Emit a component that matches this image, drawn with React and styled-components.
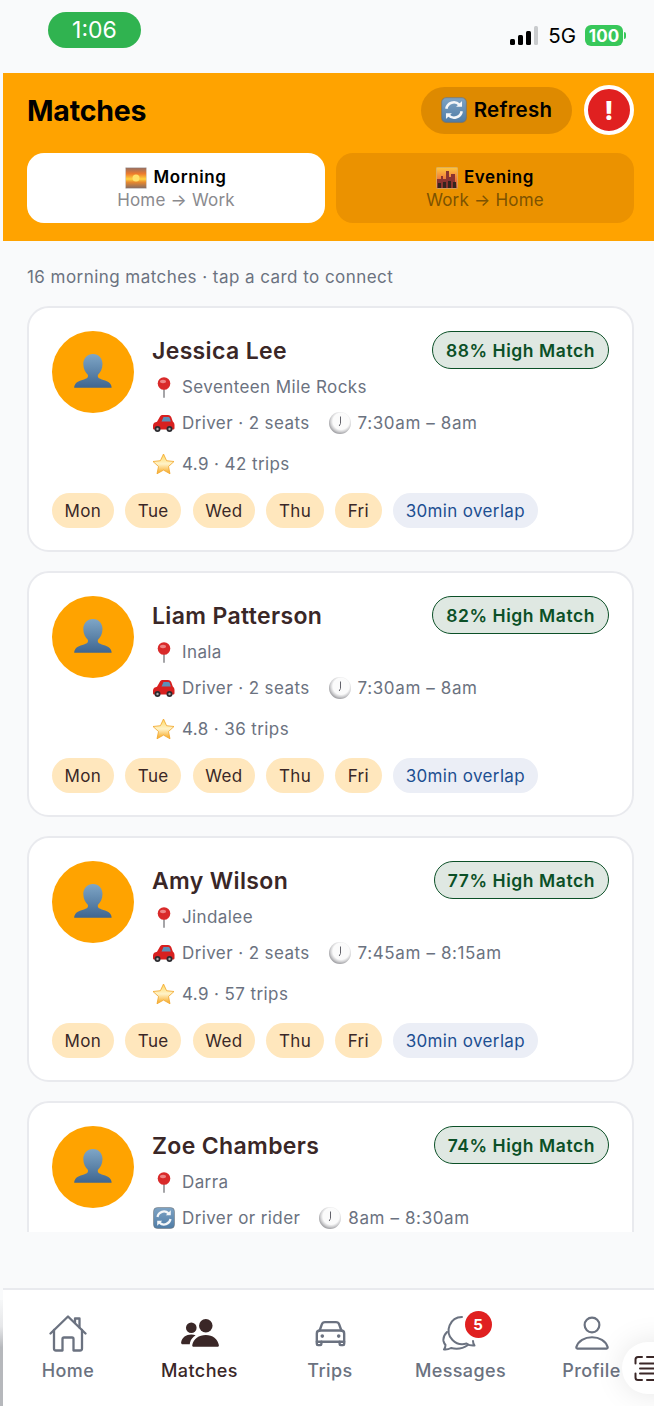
import React from "react";
import styled, { createGlobalStyle } from "styled-components";

const Global = createGlobalStyle`
  html, body { margin: 0; padding: 0; background: #f9fafb; }
  * { box-sizing: border-box; }
  body { font-family: Inter, "Noto Sans", "Liberation Sans", sans-serif; -webkit-font-smoothing: antialiased; }
`;

const Page = styled.div`
  position: relative;
  width: 654px;
  height: 1406px;
  overflow: hidden;
  display: flex;
  flex-direction: column;
  padding-left: 3px;
  background: #f9fafb;
`;
const StatusBar = styled.div`
  height: 73px;
  flex: none;
  display: flex;
  justify-content: space-between;
  padding: 12px 31px 0 45px;
`;
const Clock = styled.div`
  width: 93px;
  height: 36px;
  border-radius: 18px;
  background: #30b350;
  color: #fff;
  font-size: 23px;
  font-weight: 400;
  display: flex;
  align-items: center;
  justify-content: center;
`;
const StatusRight = styled.div`
  display: flex;
  align-items: center;
  height: 21px;
  margin-top: 13px;
  gap: 9px;
`;
const Net = styled.span`
  font-size: 20.5px;
  color: #000;
  line-height: 1;
  padding-top: 1px;
`;
const Battery = styled.div`
  position: relative;
  width: 38px;
  height: 21px;
  border-radius: 6px;
  background: #38c75a;
  color: #fff;
  font-weight: 700;
  font-size: 17px;
  display: flex;
  align-items: center;
  justify-content: center;
  &::after {
    content: "";
    position: absolute;
    right: -3px;
    top: 7px;
    width: 2px;
    height: 7px;
    border-radius: 0 2px 2px 0;
    background: #38c75a;
  }
`;
const Header = styled.header`
  flex: none;
  height: 168px;
  background: #ffa300;
  padding: 12px 20px 0 24px;
`;
const HeaderTop = styled.div`
  display: flex;
  align-items: center;
  height: 50px;
`;
const Title = styled.h1`
  flex: 1;
  margin: 0;
  font-size: 28.5px;
  font-weight: 700;
  color: #000;
  letter-spacing: -0.2px;
`;
const RefreshButton = styled.div`
  width: 151px;
  height: 47px;
  border-radius: 24px;
  background: #de8a00;
  display: flex;
  align-items: center;
  justify-content: center;
  gap: 7px;
  font-size: 20.5px;
  font-weight: 600;
  letter-spacing: 0.25px;
  color: #000;
  margin-right: 12px;
  padding-bottom: 1px;
`;
const Alert = styled.div`
  width: 50px;
  height: 50px;
  border-radius: 50%;
  background: #e02020;
  border: 4px solid #fff;
  color: #fff;
  display: flex;
  align-items: center;
  justify-content: center;
  font-size: 26px;
  font-weight: 800;
`;
const Tabs = styled.div`
  display: grid;
  grid-template-columns: 298px 298px;
  gap: 11px;
  margin-top: 18px;
`;
const Tab = styled.div`
  height: 70px;
  border-radius: 17px;
  background: ${(p) => (p.$active ? "#fff" : "#eb9200")};
  display: flex;
  flex-direction: column;
  align-items: center;
  justify-content: center;
  gap: 1px;
`;
const TabName = styled.div`
  display: flex;
  align-items: center;
  gap: 6px;
  font-size: 17px;
  font-weight: 600;
  letter-spacing: 0.6px;
  color: #000;
  line-height: 21px;
  margin-top: 1px;
`;
const TabRoute = styled.div`
  font-size: 17px;
  letter-spacing: 0.2px;
  line-height: 21px;
  color: ${(p) => (p.$active ? "#8a8a8e" : "#7d5200")};
`;
const Body = styled.main`
  flex: none;
  height: 991px;
  overflow: hidden;
  padding: 25px 20px 0 24px;
`;
const Summary = styled.div`
  font-size: 17px;
  line-height: 22px;
  letter-spacing: 0.45px;
  color: #6b7280;
  margin-bottom: 18px;
`;
const CardList = styled.div`
  display: flex;
  flex-direction: column;
  gap: 19px;
`;
const Card = styled.article`
  height: 246px;
  flex: none;
  background: #fff;
  border: 2px solid #e9eaee;
  border-radius: 22px;
  padding: 23px;
`;
const CardMain = styled.div`
  display: flex;
  gap: 18px;
`;
const Avatar = styled.div`
  width: 82px;
  height: 82px;
  flex: none;
  border-radius: 50%;
  background: #ffa300;
  display: flex;
  align-items: center;
  justify-content: center;
`;
const Info = styled.div`
  flex: 1;
  min-width: 0;
`;
const NameRow = styled.div`
  display: flex;
  justify-content: space-between;
  align-items: flex-start;
  height: 38px;
`;
const Name = styled.div`
  font-size: 23px;
  font-weight: 600;
  letter-spacing: 0.35px;
  color: #3a2727;
  line-height: 40px;
`;
const MatchPill = styled.div`
  height: 38px;
  border-radius: 19px;
  background: #dfe8e2;
  border: 1.5px solid #0b5027;
  color: #0b5027;
  font-size: 17.5px;
  font-weight: 600;
  letter-spacing: 0.56px;
  display: flex;
  align-items: center;
  padding: 0 13px;
`;
const Meta = styled.div`
  display: flex;
  align-items: center;
  gap: 19px;
  height: 22px;
  margin-top: ${(p) => p.$top}px;
`;
const MetaItem = styled.div`
  display: flex;
  align-items: center;
  gap: 7px;
  font-size: 17px;
  color: #6b7280;
  letter-spacing: ${(p) => (p.$wide ? "0.62px" : "0.4px")};
  white-space: nowrap;
`;
const EmojiSlot = styled.span`
  width: 23px;
  height: 22px;
  display: flex;
  align-items: center;
  justify-content: center;
`;
const Chips = styled.div`
  display: flex;
  gap: 11.4px;
  margin-top: 18px;
`;
const Chip = styled.div`
  height: 35px;
  border-radius: 18px;
  padding: 0 12.6px;
  display: flex;
  align-items: center;
  font-size: 17px;
  letter-spacing: 0.35px;
  background: ${(p) => (p.$blue ? "#ebeef6" : "#ffe7bd")};
  color: ${(p) => (p.$blue ? "#1d4f91" : "#3a2727")};
`;
const Nav = styled.nav`
  flex: 1;
  background: #fff;
  border-top: 2px solid #e9eaee;
  margin-top: 56px;
  display: grid;
  grid-template-columns: 130px 133px 128px 133px 129px;
  padding-top: 25px;
  position: relative;
`;
const NavItem = styled.div`
  display: flex;
  flex-direction: column;
  align-items: center;
  height: 66px;
  gap: 8px;
  color: ${(p) => (p.$active ? "#3a2727" : "#6b7280")};
  font-size: 18px;
  font-weight: 500;
  letter-spacing: 0.4px;
`;
const IconWrap = styled.div`
  position: relative;
  width: 40px;
  height: 38px;
  display: flex;
  align-items: center;
  justify-content: center;
`;
const Badge = styled.div`
  position: absolute;
  left: 24px;
  top: -4px;
  width: 27px;
  height: 27px;
  border-radius: 50%;
  background: #e02020;
  color: #fff;
  font-size: 15px;
  font-weight: 700;
  letter-spacing: 0;
  display: flex;
  align-items: center;
  justify-content: center;
`;
const ScanFab = styled.div`
  position: absolute;
  left: 622px;
  top: 1342px;
  width: 76px;
  height: 52px;
  border-radius: 26px;
  background: #fff;
  box-shadow: 0 0 30px rgba(0, 0, 0, 0.1);
  padding: 13px 0 0 12px;
`;
const LeftEdge = styled.div`
  position: absolute;
  left: 0;
  top: 1300px;
  width: 3px;
  height: 106px;
  background: linear-gradient(#f6f7f8, #e6e7e9 25%, #b6b8bc 45%, #b6b8bc);
`;

const Bust = () => (
  <svg width="40" height="40" viewBox="0 0 40 40">
    <defs>
      <linearGradient id="bg" x1="0" y1="0" x2="0" y2="1">
        <stop offset="0" stopColor="#7fa6c6" />
        <stop offset="1" stopColor="#3f6690" />
      </linearGradient>
    </defs>
    <path fill="url(#bg)" d="M20 2c6 0 9.500 4.600 9.500 10 0 5-2.300 8.500-4.300 10.500-.7.800-.5 3 .8 3.800 3 1.600 9.600 2.600 11.600 6 .8 1.300 1 2.400 1 3.400H1.200c0-1 .2-2.100 1-3.400 2-3.400 8.600-4.400 11.600-6 1.300-.8 1.500-3 .8-3.800-2-2-4.300-5.500-4.300-10.500C10.300 6.600 14 2 20 2z" />
  </svg>
);
const Pin = () => (
  <svg width="14" height="21" viewBox="0 0 14 21">
    <rect x="6" y="10" width="2" height="11" rx="1" fill="#a5a5a8" />
    <circle cx="7" cy="6.500" r="6.300" fill="#d92a2a" />
    <ellipse cx="6" cy="4.500" rx="3" ry="1.700" fill="#ee8585" />
  </svg>
);
const Car = () => (
  <svg width="23" height="20" viewBox="0 0 23 20">
    <path fill="#d8201f" d="M1 12.500C1 10 3 9.300 5 8.800L8 3.500C8.700 2.300 9.800 2 11 2h5c1.500 0 2.500.7 3.200 2l1.600 4.500c1.100 1 1.700 2 1.700 3.500v3c0 1-.6 1.500-1.500 1.500H2.500C1.500 16.500 1 16 1 15z" />
    <path fill="#5d90b8" d="M9.500 8.500l2-4.500h4.500c1 0 1.500.5 1.800 1.200l1 3.300z" />
    <circle cx="5.500" cy="16" r="3" fill="#2b2b30" />
    <circle cx="17.500" cy="16" r="3" fill="#2b2b30" />
    <circle cx="5.500" cy="16" r="1.200" fill="#aaa" />
    <circle cx="17.500" cy="16" r="1.200" fill="#aaa" />
  </svg>
);
const ClockIcon = () => (
  <svg width="22" height="22" viewBox="0 0 22 22">
    <defs>
      <radialGradient id="cg" cx="0.55" cy="0.42" r="0.6">
        <stop offset="0.62" stopColor="#fbfbfb" />
        <stop offset="0.8" stopColor="#d0d0d2" />
        <stop offset="1" stopColor="#96969a" />
      </radialGradient>
    </defs>
    <circle cx="11" cy="11" r="11" fill="url(#cg)" />
    <path d="M11.500 4.500V11.500l-1.300 2.500" fill="none" stroke="#62626a" strokeWidth="1" />
  </svg>
);
const Star = () => (
  <svg width="23" height="22" viewBox="0 0 23 22">
    <defs>
      <linearGradient id="sg" x1="0" y1="0" x2="0" y2="1">
        <stop offset="0" stopColor="#ffd75e" />
        <stop offset="0.5" stopColor="#fff3c8" />
        <stop offset="1" stopColor="#f7a51c" />
      </linearGradient>
    </defs>
    <path fill="url(#sg)" stroke="#f0a428" strokeWidth="0.8" d="M11.500 1l3.100 6.700 7.400.8-5.500 5 1.500 7.300-6.500-3.700L5 20.800l1.500-7.300-5.500-5 7.400-.8z" />
  </svg>
);
const RefreshEmoji = ({ size = 22 }) => (
  <svg width={size} height={size} viewBox="0 0 22 22">
    <defs>
      <linearGradient id="rg" x1="0" y1="0" x2="0" y2="1">
        <stop offset="0" stopColor="#7ea3c4" />
        <stop offset="1" stopColor="#4f7ca6" />
      </linearGradient>
    </defs>
    <rect x="0.500" y="0.500" width="21" height="21" rx="4" fill="url(#rg)" stroke="#6c6c6c" strokeOpacity="0.5" />
    <path d="M4.500 10a6.500 6.500 0 0 1 11-3.600M17.500 12a6.500 6.500 0 0 1-11 3.600" fill="none" stroke="#f4f6f8" strokeWidth="2.200" />
    <path d="M17.800 3.300v5h-5zM4.200 18.700v-5h5z" fill="#f4f6f8" />
  </svg>
);
const Sunrise = () => (
  <svg width="22" height="22" viewBox="0 0 22 22">
    <defs>
      <linearGradient id="sr" x1="0" y1="0" x2="0" y2="1">
        <stop offset="0" stopColor="#8f6f68" />
        <stop offset="0.3" stopColor="#ee7a2c" />
        <stop offset="0.55" stopColor="#ffd23f" />
        <stop offset="0.7" stopColor="#e8892e" />
        <stop offset="1" stopColor="#7f6a66" />
      </linearGradient>
    </defs>
    <rect x="0.400" y="0.400" width="21.200" height="21.200" rx="1" fill="url(#sr)" stroke="#d5d5d5" strokeWidth="0.8" />
    <circle cx="11" cy="11" r="3.500" fill="#ffe16a" />
  </svg>
);
const City = () => (
  <svg width="22" height="22" viewBox="0 0 22 22">
    <defs>
      <linearGradient id="cy" x1="0" y1="0" x2="0" y2="1">
        <stop offset="0" stopColor="#ffc83c" />
        <stop offset="0.6" stopColor="#f0733a" />
        <stop offset="1" stopColor="#a84a3a" />
      </linearGradient>
    </defs>
    <rect x="0.400" y="0.400" width="21.200" height="21.200" rx="1" fill="url(#cy)" stroke="#d5b070" strokeWidth="0.8" />
    <path d="M1 21v-9h4V9h2v3h3V4h3v6h2V7h4v14z" fill="#8a3430" />
    <path d="M2 21v-5h3v5zM7 21v-6h3v6zM12 21v-7h3v7zM17 21v-6h3v6z" fill="#33241f" />
  </svg>
);
const Signal = () => (
  <svg width="30" height="19" viewBox="0 0 30 19">
    <rect x="1" y="13" width="5" height="6" rx="1.500" fill="#000" />
    <rect x="9" y="9" width="5" height="10" rx="1.500" fill="#000" />
    <rect x="17" y="5" width="5" height="14" rx="1.500" fill="#000" />
    <rect x="25" y="0" width="4" height="19" rx="1.500" fill="#c9cbcd" />
  </svg>
);
const stroke = { fill: "none", stroke: "#6b7280", strokeWidth: 2.3, strokeLinecap: "round", strokeLinejoin: "round" };
const HomeIcon = () => (
  <svg width="38" height="37" viewBox="0 0 38 37" {...stroke}>
    <path d="M1.500 18.500 19 1.500l17.500 17" />
    <path d="M5 15v18.500c0 1.200.8 2 2 2h6.500V24c0-1 .6-1.500 1.500-1.500h8c1 0 1.500.6 1.500 1.500v11.500H31c1.200 0 2-.8 2-2V15" />
    <path d="M26 8V3.500h4.500V12.500" />
  </svg>
);
const PeopleIcon = () => (
  <svg width="38" height="29" viewBox="0 0 39 30" fill="#3a2727">
    <circle cx="10.500" cy="9" r="5.500" />
    <circle cx="25.500" cy="7" r="7" />
    <path d="M0 24c1-5 5-8 10.500-8 1.700 0 3.200.3 4.500.8-3 1.800-5 4.400-5.800 7.400-.2.800-.2 1.200-.2 1.800H1.500C.4 26-.2 25.200 0 24z" />
    <path d="M11.500 27c1-6.500 7-10.500 14-10.500s12.500 4 13.500 10.500c.2 1-.5 1.800-1.500 1.800H13c-1 0-1.700-.8-1.500-1.800z" />
  </svg>
);
const CarOutline = () => (
  <svg width="31" height="27" viewBox="0 0 34 28" {...stroke} strokeWidth="2.600">
    <path d="M5 11 7.500 4c.5-1.500 1.500-2.500 3.500-2.500h12c2 0 3 1 3.500 2.500L29 11" />
    <path d="M2 14c0-2 1.500-3.300 3.500-3.300h23c2 0 3.500 1.300 3.500 3.300v9H2z" />
    <path d="M2 23v2.500c0 .7.500 1.200 1.200 1.200h2.600c.7 0 1.200-.5 1.200-1.200V23M27 23v2.500c0 .7.500 1.200 1.200 1.200h2.600c.7 0 1.200-.5 1.200-1.200V23" />
    <circle cx="8" cy="16.800" r="2" fill="#6b7280" stroke="none" />
    <circle cx="26" cy="16.800" r="2" fill="#6b7280" stroke="none" />
  </svg>
);
const Bubbles = () => (
  <svg width="37" height="37" viewBox="0 0 37 37" {...stroke} strokeWidth="2">
    <path d="M20 2a13.500 13.500 0 0 0-9.500 23c3.500 3.500 9 5 14 3.500 2 1.500 5 2.300 8 2-1-1.500-1.500-3-1.500-4.500" />
    <path d="M5 17C2 20 1 23 1.500 26c.3 1.500 1 2.800 2 4 0 1.500-.5 3-1.500 4.500 2.500.3 5-.3 7-1.500 5.500 1.500 12 .5 17-3" />
  </svg>
);
const ProfileIcon = () => (
  <svg width="34" height="37" viewBox="0 0 36 38" {...stroke}>
    <circle cx="18" cy="10" r="7.800" />
    <path d="M2.500 35c-1 0-1.300-.8-1-1.800C3.500 27 10 23 18 23s14.500 4 16.500 10.200c.3 1 0 1.800-1 1.800z" />
  </svg>
);
const ScanIcon = () => (
  <svg width="32" height="27" viewBox="0 0 32 26" fill="none" stroke="#3a2727" strokeWidth="2" strokeLinecap="round">
    <path d="M1.500 8V4c0-1.500 1-2.500 2.500-2.500h4M1.500 18v4c0 1.500 1 2.500 2.500 2.500h4M13 1.500h14M13 24.500h14" />
    <path d="M6 8h20M6 13h20M6 18h14" />
  </svg>
);

const people = [
  { name: "Jessica Lee", pct: 88, area: "Seventeen Mile Rocks", time: "7:30am – 8am", rating: "4.9 · 42 trips" },
  { name: "Liam Patterson", pct: 82, area: "Inala", time: "7:30am – 8am", rating: "4.8 · 36 trips" },
  { name: "Amy Wilson", pct: 77, area: "Jindalee", time: "7:45am – 8:15am", rating: "4.9 · 57 trips" },
  { name: "Zoe Chambers", pct: 74, area: "Darra", time: "8am – 8:30am", either: true },
];
const days = ["Mon", "Tue", "Wed", "Thu", "Fri"];

const MatchCard = ({ p }) => (
  <Card>
    <CardMain>
      <Avatar><Bust /></Avatar>
      <Info>
        <NameRow>
          <Name>{p.name}</Name>
          <MatchPill>{p.pct}% High Match</MatchPill>
        </NameRow>
        <Meta $top={7}>
          <MetaItem><EmojiSlot><Pin /></EmojiSlot><span>{p.area}</span></MetaItem>
        </Meta>
        <Meta $top={14}>
          <MetaItem><EmojiSlot>{p.either ? <RefreshEmoji /> : <Car />}</EmojiSlot><span>{p.either ? "Driver or rider" : "Driver · 2 seats"}</span></MetaItem>
          <MetaItem $wide><ClockIcon /><span>{p.time}</span></MetaItem>
        </Meta>
        {p.rating && (
          <Meta $top={19}>
            <MetaItem><EmojiSlot><Star /></EmojiSlot><span>{p.rating}</span></MetaItem>
          </Meta>
        )}
      </Info>
    </CardMain>
    {p.rating && (
      <Chips>
        {days.map((d) => <Chip key={d}>{d}</Chip>)}
        <Chip $blue>30min overlap</Chip>
      </Chips>
    )}
  </Card>
);

export default function App() {
  return (
    <Page>
      <Global />
      <LeftEdge />
      <StatusBar>
        <Clock>1:06</Clock>
        <StatusRight>
          <Signal />
          <Net>5G</Net>
          <Battery>100</Battery>
        </StatusRight>
      </StatusBar>
      <Header>
        <HeaderTop>
          <Title>Matches</Title>
          <RefreshButton><RefreshEmoji size={26} />Refresh</RefreshButton>
          <Alert>!</Alert>
        </HeaderTop>
        <Tabs>
          <Tab $active>
            <TabName><Sunrise />Morning</TabName>
            <TabRoute $active>Home → Work</TabRoute>
          </Tab>
          <Tab>
            <TabName><City />Evening</TabName>
            <TabRoute>Work → Home</TabRoute>
          </Tab>
        </Tabs>
      </Header>
      <Body>
        <Summary>16 morning matches · tap a card to connect</Summary>
        <CardList>
          {people.map((p) => <MatchCard key={p.name} p={p} />)}
        </CardList>
      </Body>
      <Nav>
        <NavItem><IconWrap><HomeIcon /></IconWrap>Home</NavItem>
        <NavItem $active><IconWrap><PeopleIcon /></IconWrap>Matches</NavItem>
        <NavItem><IconWrap><CarOutline /></IconWrap>Trips</NavItem>
        <NavItem><IconWrap><Bubbles /><Badge>5</Badge></IconWrap>Messages</NavItem>
        <NavItem><IconWrap><ProfileIcon /></IconWrap>Profile</NavItem>
      </Nav>
      <ScanFab><ScanIcon /></ScanFab>
    </Page>
  );
}
